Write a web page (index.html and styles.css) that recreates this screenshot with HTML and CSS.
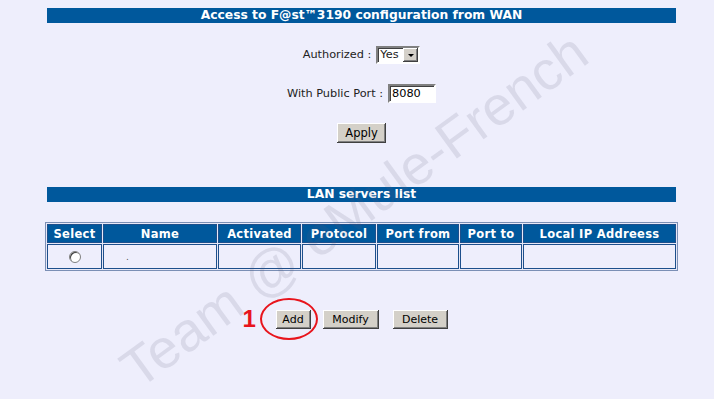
FILE: index.html
```html
<!DOCTYPE html>
<html lang="en">
<head>
<meta charset="UTF-8">
<title>WAN access</title>
<link rel="stylesheet" href="styles.css">
</head>
<body>

<div class="page">
  <div class="bar">Access to F@st&trade;3190 configuration from WAN</div>

  <div class="field first">
    <span class="label">Authorized :</span>
    <span class="combo"><span class="combo-value">Yes</span><span class="combo-arrow"></span></span>
  </div>

  <div class="field">
    <span class="label">With Public Port :</span>
    <span class="textbox">8080</span>
  </div>

  <div class="field apply-row">
    <button class="btn btn-apply">Apply</button>
  </div>

  <div class="bar lan-bar">LAN servers list</div>

  <table class="servers">
    <tr>
      <th class="c-select">Select</th>
      <th class="c-name">Name</th>
      <th class="c-act">Activated</th>
      <th class="c-proto">Protocol</th>
      <th class="c-from">Port from</th>
      <th class="c-to">Port to</th>
      <th class="c-ip">Local IP Addreess</th>
    </tr>
    <tr>
      <td class="center"><span class="radio"></span></td>
      <td class="name-cell">.</td>
      <td></td>
      <td></td>
      <td></td>
      <td></td>
      <td></td>
    </tr>
  </table>

  <div class="actions">
    <span class="mark">
      <span class="mark-num">1</span>
      <span class="mark-ring"></span>
      <button class="btn btn-add">Add</button>
    </span>
    <button class="btn btn-modify">Modify</button>
    <button class="btn btn-delete">Delete</button>
  </div>
</div>

<!-- watermark -->
<div class="watermark">Team @ eMule-French</div>

</body>
</html>
```

FILE: styles.css
```css
body {
  margin: 0;
  background: #eeeefc;
  font-family: 'DejaVu Sans', Verdana, sans-serif;
  font-size: 11px;
  color: #222;
  height: 399px;
  overflow: hidden;
  position: relative;
}

.page {
  width: 629px;
  margin-left: 47px;
  padding-top: 8px;
}

.bar {
  background: #00589c;
  color: #fff;
  font-weight: bold;
  font-size: 12.3px;
  height: 15px;
  line-height: 15px;
  text-align: center;
}

.lan-bar {
  margin-top: 44px;
}

.field {
  display: flex;
  justify-content: center;
  align-items: center;
  margin-top: 20px;
  height: 19px;
  font-size: 11.3px;
}

.field.first {
  margin-top: 22px;
}

.label {
  margin-right: 5px;
  color: #222;
}

.combo {
  display: inline-flex;
  align-items: center;
  width: 40px;
  height: 14px;
  background: #fff;
  border: 2px solid;
  border-color: #808080 #fff #fff #808080;
  box-shadow: inset 1px 1px #404040;
}

.combo-value {
  flex: 1;
  padding-left: 2px;
  line-height: 14px;
}

.combo-arrow {
  width: 15px;
  height: 14px;
  background: #d4d0c8;
  box-shadow: inset -1px -1px #404040, inset 1px 1px #fff, inset -2px -2px #808080;
  position: relative;
}

.combo-arrow::after {
  content: "";
  position: absolute;
  left: 5px;
  top: 6px;
  border-left: 3px solid transparent;
  border-right: 3px solid transparent;
  border-top: 3px solid #000;
}

.textbox {
  display: inline-block;
  width: 42px;
  height: 15px;
  line-height: 15px;
  padding-left: 2px;
  background: #fff;
  border: 2px solid;
  border-color: #808080 #fff #fff #808080;
  box-shadow: inset 1px 1px #404040;
  color: #000;
}

.apply-row {
  margin-top: 20px;
  height: 20px;
}

.btn {
  font-family: 'DejaVu Sans', Verdana, sans-serif;
  font-size: 11px;
  color: #000;
  background: #d4d0c8;
  border: none;
  padding: 0;
  height: 19px;
  box-shadow: inset -1px -1px #404040, inset 1px 1px #fff, inset -2px -2px #808080;
}

.btn-apply {
  width: 49px;
  height: 20px;
  font-size: 11.5px;
}

.servers {
  margin-top: 20px;
  margin-left: -2px;
  width: 633px;
  border: 1px solid #7b8fb5;
  border-collapse: separate;
  border-spacing: 1px;
  background: #e8e8f6;
  table-layout: fixed;
}

.servers th,
.servers td {
  border: 1px solid #1d4f8c;
  padding: 0;
}

.servers th {
  background: #00589c;
  color: #fff;
  font-weight: bold;
  height: 17px;
  font-size: 11.5px;
  letter-spacing: 0.3px;
}

.servers td {
  height: 23px;
  background: #eeeefc;
}

.c-select { width: 53px; }
.c-name { width: 112px; }
.c-act { width: 81px; }
.c-proto { width: 72px; }
.c-from { width: 80px; }
.c-to { width: 60px; }

.center { text-align: center; }

.name-cell {
  padding-left: 22px !important;
  color: #555;
  font-size: 9px;
}

.radio {
  display: inline-block;
  width: 10px;
  height: 10px;
  border-radius: 50%;
  background: #fff;
  border: 1px solid #808080;
  box-shadow: inset 1px 1px #404040;
  vertical-align: middle;
}

.actions {
  display: flex;
  justify-content: center;
  align-items: center;
  margin-top: 39px;
  gap: 12px;
}

.btn-add { width: 35px; }
.btn-modify { width: 56px; }
.btn-delete { width: 55px; margin-left: 2px; }

.mark {
  position: relative;
  display: inline-block;
}

.mark-num {
  position: absolute;
  left: -33px;
  top: -3px;
  color: #e8141c;
  font-family: 'Liberation Sans', Arial, sans-serif;
  font-weight: bold;
  font-size: 24px;
  line-height: 24px;
}

.mark-ring {
  position: absolute;
  left: -16px;
  top: -12px;
  width: 58px;
  height: 42px;
  border: 2px solid #e8141c;
  border-radius: 50%;
  box-sizing: border-box;
}

.watermark {
  position: absolute;
  left: 354px;
  top: 210px;
  transform: translate(-50%, -50%) rotate(-36deg);
  white-space: nowrap;
  font-family: 'Liberation Sans', Arial, sans-serif;
  font-size: 55px;
  line-height: 50px;
  color: rgba(90, 90, 120, 0.14);
  pointer-events: none;
}
```
